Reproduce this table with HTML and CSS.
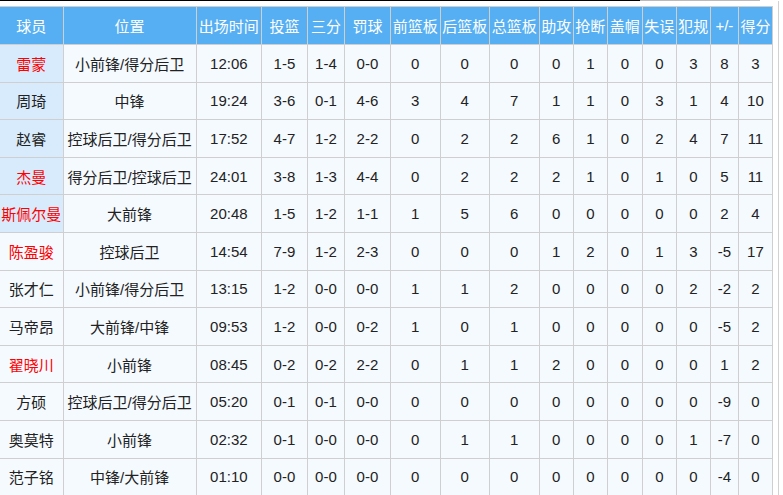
FILE: index.html
```html
<!DOCTYPE html>
<html lang="zh">
<head>
<meta charset="utf-8">
<title>球员数据</title>
<link rel="stylesheet" href="styles.css">
</head>
<body>
<div class="topline"><span class="blk"></span><span class="fade"></span></div>
<div class="wrap">
<table class="stats">
<colgroup>
<col style="width:63px"><col style="width:133px"><col style="width:65.5px"><col style="width:45.5px"><col style="width:37.5px"><col style="width:45.5px"><col style="width:50px"><col style="width:49px"><col style="width:50px"><col style="width:34px"><col style="width:34px"><col style="width:35px"><col style="width:34px"><col style="width:34px"><col style="width:28px"><col style="width:34px">
</colgroup>
<thead>
<tr><th>球员</th><th>位置</th><th>出场时间</th><th>投篮</th><th>三分</th><th>罚球</th><th>前篮板</th><th>后篮板</th><th>总篮板</th><th>助攻</th><th>抢断</th><th>盖帽</th><th>失误</th><th>犯规</th><th>+/-</th><th>得分</th></tr>
</thead>
<tbody>
<tr><td class="name starter red">雷蒙</td><td>小前锋/得分后卫</td><td>12:06</td><td>1-5</td><td>1-4</td><td>0-0</td><td>0</td><td>0</td><td>0</td><td>0</td><td>1</td><td>0</td><td>0</td><td>3</td><td>8</td><td>3</td></tr>
<tr><td class="name starter">周琦</td><td>中锋</td><td>19:24</td><td>3-6</td><td>0-1</td><td>4-6</td><td>3</td><td>4</td><td>7</td><td>1</td><td>1</td><td>0</td><td>3</td><td>1</td><td>4</td><td>10</td></tr>
<tr><td class="name starter">赵睿</td><td>控球后卫/得分后卫</td><td>17:52</td><td>4-7</td><td>1-2</td><td>2-2</td><td>0</td><td>2</td><td>2</td><td>6</td><td>1</td><td>0</td><td>2</td><td>4</td><td>7</td><td>11</td></tr>
<tr><td class="name starter red">杰曼</td><td>得分后卫/控球后卫</td><td>24:01</td><td>3-8</td><td>1-3</td><td>4-4</td><td>0</td><td>2</td><td>2</td><td>2</td><td>1</td><td>0</td><td>1</td><td>0</td><td>5</td><td>11</td></tr>
<tr><td class="name starter red">斯佩尔曼</td><td>大前锋</td><td>20:48</td><td>1-5</td><td>1-2</td><td>1-1</td><td>1</td><td>5</td><td>6</td><td>0</td><td>0</td><td>0</td><td>0</td><td>0</td><td>2</td><td>4</td></tr>
<tr><td class="name red">陈盈骏</td><td>控球后卫</td><td>14:54</td><td>7-9</td><td>1-2</td><td>2-3</td><td>0</td><td>0</td><td>0</td><td>1</td><td>2</td><td>0</td><td>1</td><td>3</td><td>-5</td><td>17</td></tr>
<tr><td class="name">张才仁</td><td>小前锋/得分后卫</td><td>13:15</td><td>1-2</td><td>0-0</td><td>0-0</td><td>1</td><td>1</td><td>2</td><td>0</td><td>0</td><td>0</td><td>0</td><td>2</td><td>-2</td><td>2</td></tr>
<tr><td class="name">马帝昂</td><td>大前锋/中锋</td><td>09:53</td><td>1-2</td><td>0-0</td><td>0-2</td><td>1</td><td>0</td><td>1</td><td>0</td><td>0</td><td>0</td><td>0</td><td>0</td><td>-5</td><td>2</td></tr>
<tr><td class="name red">翟晓川</td><td>小前锋</td><td>08:45</td><td>0-2</td><td>0-2</td><td>2-2</td><td>0</td><td>1</td><td>1</td><td>2</td><td>0</td><td>0</td><td>0</td><td>0</td><td>1</td><td>2</td></tr>
<tr><td class="name">方硕</td><td>控球后卫/得分后卫</td><td>05:20</td><td>0-1</td><td>0-1</td><td>0-0</td><td>0</td><td>0</td><td>0</td><td>0</td><td>0</td><td>0</td><td>0</td><td>0</td><td>-9</td><td>0</td></tr>
<tr><td class="name">奥莫特</td><td>小前锋</td><td>02:32</td><td>0-1</td><td>0-0</td><td>0-0</td><td>0</td><td>1</td><td>1</td><td>0</td><td>0</td><td>0</td><td>0</td><td>1</td><td>-7</td><td>0</td></tr>
<tr><td class="name">范子铭</td><td>中锋/大前锋</td><td>01:10</td><td>0-0</td><td>0-0</td><td>0-0</td><td>0</td><td>0</td><td>0</td><td>0</td><td>0</td><td>0</td><td>0</td><td>0</td><td>-4</td><td>0</td></tr>
</tbody>
</table>
</div>
</body>
</html>
```
FILE: styles.css
```css
html, body {
  margin: 0;
  padding: 0;
  background: #fff;
  overflow: hidden;
}
body {
  font-family: "Liberation Sans", "Noto Sans CJK SC", sans-serif;
  font-size: 15px;
  color: #222;
}
.topline {
  display: flex;
  height: 1px;
}
.topline .blk {
  width: 640px;
  background: #000;
}
.topline .fade {
  width: 120px;
  background: #bbb;
}
.wrap {
  width: 779px;
  height: 494px;
  padding-top: 5px;
  border-right: 1px solid #d2d2d2;
  box-sizing: border-box;
}
.stats {
  table-layout: fixed;
  width: 773px;
  border-collapse: collapse;
  border-top: 1px solid #cfcfcf;
}
.stats th, .stats td {
  border: 1px solid #cfcfcf;
  padding: 0;
  text-align: center;
  white-space: nowrap;
  overflow: hidden;
  font-weight: normal;
}
.stats tr > :first-child {
  border-left: none;
}
.stats thead tr {
  height: 38px;
}
.stats th {
  background: #56aff2;
  color: #fff;
}
.stats tbody tr {
  height: 37.6px;
}
.stats td {
  background: #f5faff;
}
.stats td.starter {
  background: #d8ebfc;
}
.stats td.red {
  color: #ff0000;
}
```
